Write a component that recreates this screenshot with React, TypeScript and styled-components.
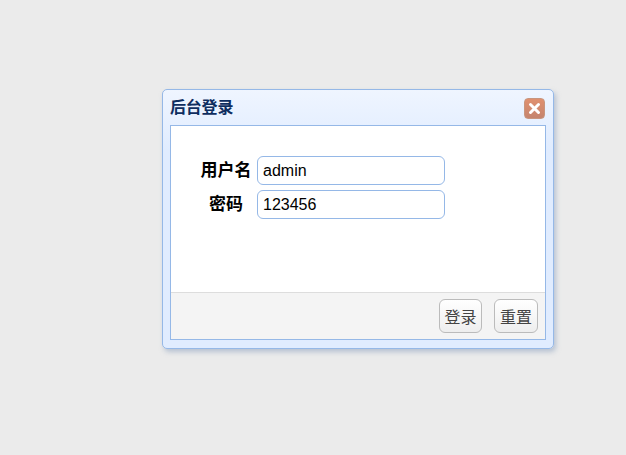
import React from "react";
import styled, { createGlobalStyle } from "styled-components";

const Global = createGlobalStyle`
  html, body { margin: 0; padding: 0; height: 100%; }
  body { background: #ebebeb; font-family: "Liberation Sans", "Noto Sans CJK SC", sans-serif; overflow: hidden; }
  #root { height: 100%; }
`;

const Page = styled.div`
  width: 626px;
  height: 455px;
  padding: 89px 0 0 162px;
  box-sizing: border-box;
`;

const Dialog = styled.div`
  width: 392px;
  height: 260px;
  box-sizing: border-box;
  border: 1px solid #95b8e7;
  border-radius: 5px;
  background: linear-gradient(to bottom, #eff5ff 0, #e0ecff 60px, #e0ecff 100%);
  box-shadow: 2px 3px 5px rgba(140, 160, 190, 0.55);
  padding: 0 7px 8px 7px;
  display: flex;
  flex-direction: column;
`;

const Header = styled.div`
  height: 35px;
  flex: none;
  display: flex;
  align-items: center;
  justify-content: space-between;
`;

const Title = styled.div`
  font-size: 16px;
  font-weight: bold;
  color: #0e2d5f;
  line-height: 20px;
  margin-top: 1px;
  letter-spacing: -0.2px;
`;

const Close = styled.button`
  width: 21px;
  height: 21px;
  padding: 0;
  border: 1px solid #c8967f;
  border-radius: 4px;
  background: linear-gradient(to bottom, #e0906f, #c5846e);
  display: flex;
  align-items: center;
  justify-content: center;
  margin: 1px 1px 0 0;
`;

const Panel = styled.div`
  flex: 1;
  display: flex;
  flex-direction: column;
  border: 1px solid #95b8e7;
  background: #fff;
`;

const Body = styled.div`
  flex: 1;
  padding: 30px 0 0 22px;
  display: flex;
  flex-direction: column;
  gap: 5px;
`;

const Row = styled.div`
  display: flex;
  align-items: center;
  height: 29px;
`;

const Label = styled.label`
  width: 64px;
  padding-left: 2px;
  box-sizing: border-box;
  text-align: center;
  font-size: 17px;
  line-height: 20px;
  font-weight: bold;
  color: #000;
`;

const Input = styled.input`
  width: 188px;
  height: 29px;
  box-sizing: border-box;
  border: 1px solid #95b8e7;
  border-radius: 6px;
  padding: 0 5px;
  font: 16px "Liberation Sans", "Noto Sans CJK SC", sans-serif;
  color: #000;
  background: #fff;
  outline: none;
`;

const Footer = styled.div`
  height: 47px;
  flex: none;
  box-sizing: border-box;
  border-top: 1px solid #dddddd;
  background: #f4f4f4;
  display: flex;
  justify-content: flex-end;
  align-items: flex-start;
  gap: 12px;
  padding: 6px 7px 0 0;
`;

const Button = styled.button`
  width: ${(p: { $w: number }) => p.$w}px;
  height: 34px;
  box-sizing: border-box;
  border: 1px solid #bbbbbb;
  border-radius: 6px;
  background: linear-gradient(to bottom, #ffffff 0, #eeeeee 100%);
  padding: 0;
  font: 16px "Liberation Sans", "Noto Sans CJK SC", sans-serif;
  color: #444;
`;

export default function App() {
  return (
    <Page>
      <Global />
      <Dialog>
        <Header>
          <Title>后台登录</Title>
          <Close aria-label="关闭">
            <svg width="13" height="13" viewBox="0 0 13 13">
              <path d="M2.5 2.5 L10.5 10.5 M10.5 2.5 L2.5 10.5" stroke="#fff" strokeWidth="3" strokeLinecap="round" />
            </svg>
          </Close>
        </Header>
        <Panel>
          <Body>
            <Row>
              <Label>用户名</Label>
              <Input defaultValue="admin" />
            </Row>
            <Row>
              <Label>密码</Label>
              <Input defaultValue="123456" />
            </Row>
          </Body>
          <Footer>
            <Button $w={43}>登录</Button>
            <Button $w={44}>重置</Button>
          </Footer>
        </Panel>
      </Dialog>
    </Page>
  );
}
